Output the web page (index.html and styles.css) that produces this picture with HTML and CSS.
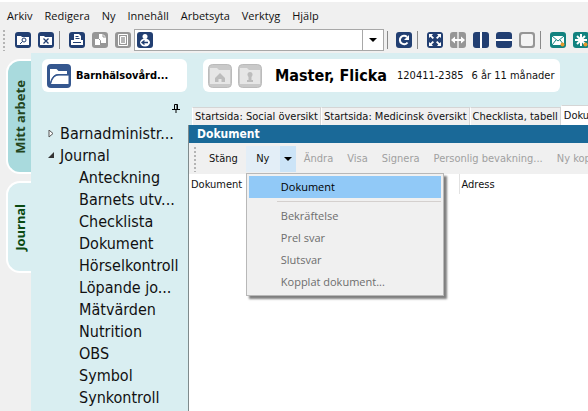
FILE: index.html
```
<!DOCTYPE html>
<html lang="sv">
<head>
    <meta charset="UTF-8">
    <meta name="viewport" content="width=device-width, initial-scale=1.0">
    <title>Dokument - Master, Flicka</title>
    <link rel="stylesheet" href="styles.css">
</head>
<body>
    <nav class="menubar">
        <button>Arkiv</button>
        <button>Redigera</button>
        <button>Ny</button>
        <button>Innehåll</button>
        <button>Arbetsyta</button>
        <button>Verktyg</button>
        <button>Hjälp</button>
    </nav>

    <div class="toolbar">
        <span class="grip"></span>
        <button class="icon" aria-label="Sök patient">
            <svg viewBox="0 0 16 16"><rect width="16" height="16" rx="3" fill="#223f72"/><path d="M2 4h4l1 1h7v8H2z" fill="#fff"/><circle cx="9" cy="8" r="2" fill="none" stroke="#223f72"/><path d="M7.500 9.500L5 12" stroke="#223f72"/></svg>
        </button>
        <button class="icon" aria-label="Stäng patient">
            <svg viewBox="0 0 16 16"><rect width="16" height="16" rx="3" fill="#223f72"/><path d="M2 4h4l1 1h7v8H2z" fill="#fff"/><path d="M5.500 6.500l5 5M10.500 6.500l-5 5" stroke="#223f72" stroke-width="1.300"/></svg>
        </button>
        <span class="divider"></span>
        <button class="icon" aria-label="Skriv ut">
            <svg viewBox="0 0 16 16"><rect width="16" height="16" rx="3" fill="#223f72"/><path d="M5 2h5l2 2v4h2v5H2V8h3z" fill="#fff"/><path d="M6.500 4.500h3M6.500 6.500h4M4 10.500h8" stroke="#223f72"/></svg>
        </button>
        <button class="icon" aria-label="Kopiera" disabled>
            <svg viewBox="0 0 16 16"><rect width="16" height="16" rx="3" fill="#969696"/><path d="M7 2h4l3 3v6H7z" fill="#fff"/><path d="M11 2v3h3" fill="none" stroke="#969696"/><path d="M2.500 6.500h4l2 2v5h-6z" fill="#fff" stroke="#969696"/></svg>
        </button>
        <button class="icon" aria-label="Klistra in" disabled>
            <svg viewBox="0 0 16 16"><rect width="16" height="16" rx="3" fill="#969696"/><path d="M3.500 2.500h9v11h-9z" fill="none" stroke="#fff"/><path d="M5.500 4.500h5v7h-5z" fill="#b5b5b5" stroke="#fff"/></svg>
        </button>
        <div class="combo">
            <svg class="combo-icon" viewBox="0 0 16 16"><rect width="16" height="16" rx="3" fill="#223f72"/><circle cx="8" cy="4.500" r="2.500" fill="#fff"/><ellipse cx="8" cy="10.500" rx="5" ry="4" fill="#fff"/><path d="M5 10.500h6M7.500 8.500l-2.500 2 2.500 2" fill="none" stroke="#223f72" stroke-width="1.300"/></svg>
            <select aria-label="Patient"><option></option></select>
            <span class="combo-arrow"><i class="arrow"></i></span>
        </div>
        <span class="divider after-combo"></span>
        <button class="icon" aria-label="Uppdatera">
            <svg viewBox="0 0 16 16"><rect width="16" height="16" rx="3" fill="#223f72"/><path d="M11.500 10.500A4.200 4.200 0 1 1 11 5" fill="none" stroke="#fff" stroke-width="2"/><path d="M13 3v5H8z" fill="#fff"/></svg>
        </button>
        <span class="divider"></span>
        <button class="icon" aria-label="Maximera">
            <svg viewBox="0 0 16 16"><rect width="16" height="16" rx="3" fill="#223f72"/><path d="M2 2h4L4.700 3.400 7 5.700 5.700 7 3.400 4.700 2 6zM14 2h-4l1.300 1.400L9 5.700 10.300 7l2.300-2.300L14 6zM2 14h4l-1.300-1.400L7 10.300 5.700 9l-2.300 2.300L2 10zM14 14h-4l1.300-1.400L9 10.300 10.300 9l2.300 2.300L14 10z" fill="#fff"/></svg>
        </button>
        <button class="icon" aria-label="Anpassa bredd" disabled>
            <svg viewBox="0 0 16 16"><rect width="16" height="16" rx="3" fill="#969696"/><path d="M8 0v16" stroke="#eee" stroke-width="1.500"/><path d="M1 8l4-3.500V7h6V4.500L15 8l-4 3.500V9H5v2.500z" fill="#fff"/></svg>
        </button>
        <button class="icon" aria-label="Dela lodrätt">
            <svg viewBox="0 0 16 16"><rect width="16" height="16" rx="3" fill="#223f72"/><path d="M8 0v16" stroke="#fff" stroke-width="2"/></svg>
        </button>
        <button class="icon" aria-label="Dela vågrätt">
            <svg viewBox="0 0 16 16"><rect width="16" height="16" rx="3" fill="#223f72"/><path d="M0 8h16" stroke="#fff" stroke-width="2"/></svg>
        </button>
        <button class="icon" aria-label="Ett fönster" disabled>
            <svg viewBox="0 0 16 16"><rect width="16" height="16" rx="3" fill="#969696"/><rect x="2" y="2" width="12" height="12" rx="2" fill="#f4f4f4"/></svg>
        </button>
        <span class="divider"></span>
        <button class="icon" aria-label="Nytt meddelande">
            <svg viewBox="0 0 16 16"><rect width="16" height="16" rx="3" fill="#12827f"/><path d="M2 4h12v9H2z" fill="#fff"/><path d="M2 4l6 5 6-5M2 13l4-5M14 13l-4-5" fill="none" stroke="#12827f"/><circle cx="12.500" cy="12.500" r="2" fill="#e59a2c"/></svg>
        </button>
        <button class="icon" aria-label="Ny notering">
            <svg viewBox="0 0 16 16"><rect width="16" height="16" rx="3" fill="#12827f"/><path d="M8 2v12M2 8h12M4 4l8 8M12 4l-8 8" stroke="#fff" stroke-width="2"/><circle cx="12.500" cy="12.500" r="2" fill="#e59a2c"/></svg>
        </button>
    </div>

    <div class="workspace">
        <div class="rail">
            <button class="rail-tab work"><span>Mitt arbete</span></button>
            <button class="rail-tab journal"><span>Journal</span></button>
        </div>

        <aside class="sidebar">
            <button class="unit">
                <svg viewBox="0 0 24 24"><rect width="24" height="24" rx="4" fill="#35578f"/><path d="M3 19.500V5h6.500l2 2H20v3h-8c-5 0-7 3-9 9.500z" fill="#fff"/><path d="M4 20c1.500-6 4-8.500 8-8.500h9.500V20z" fill="#fff"/><path d="M3.500 19C5 13 8 10.700 12 10.700h9.500" fill="none" stroke="#35578f" stroke-width="1.200"/></svg>
                Barnhälsovård...
            </button>
            <button class="pin" aria-label="Fäst panelen">
                <svg viewBox="0 0 8 9"><path d="M2.500 5V.5h3V5M5 .5V5M0 5.500h8M4 5v4" fill="none" stroke="#000"/></svg>
            </button>
            <ul class="tree">
                <li>
                    <a href="#barnadministration"><svg viewBox="0 0 9 9"><path d="M2 0v7l4-3.500z" fill="#fff" stroke="#555"/></svg>Barnadministr...</a>
                </li>
                <li>
                    <a href="#journal"><svg viewBox="0 0 9 9"><path d="M7 0v6H1z" fill="#333"/></svg>Journal</a>
                    <ul>
                        <li><a href="#anteckning">Anteckning</a></li>
                        <li><a href="#barnets">Barnets utv...</a></li>
                        <li><a href="#checklista">Checklista</a></li>
                        <li><a href="#dokument">Dokument</a></li>
                        <li><a href="#horselkontroll">Hörselkontroll</a></li>
                        <li><a href="#lopande">Löpande jo...</a></li>
                        <li><a href="#matvarden">Mätvärden</a></li>
                        <li><a href="#nutrition">Nutrition</a></li>
                        <li><a href="#obs">OBS</a></li>
                        <li><a href="#symbol">Symbol</a></li>
                        <li><a href="#synkontroll">Synkontroll</a></li>
                    </ul>
                </li>
            </ul>
        </aside>

        <main class="content">
            <div class="patient">
                <button class="patient-icon" aria-label="Hem" disabled>
                    <svg viewBox="0 0 24 24"><rect x=".5" y=".5" width="23" height="23" rx="4" fill="#c9c9c9" stroke="#bbb"/><path d="M2 4h7l2 2h11v14H2z" fill="#e6e6e6"/><path d="M12 9l-5 5v4h3.500v-3h3v3H17v-4z" fill="#bcbcbc"/></svg>
                </button>
                <button class="patient-icon" aria-label="Patientinformation" disabled>
                    <svg viewBox="0 0 24 24"><rect x=".5" y=".5" width="23" height="23" rx="4" fill="#c9c9c9" stroke="#bbb"/><path d="M2 4h7l2 2h11v14H2z" fill="#e6e6e6"/><circle cx="12" cy="10.500" r="2.500" fill="#bcbcbc"/><path d="M10.500 12h3v4H15v2H9v-2h1.500z" fill="#bcbcbc"/></svg>
                </button>
                <h1>Master, Flicka</h1>
                <span class="pid">120411-2385</span>
                <span>6 år 11 månader</span>
            </div>

            <div class="tabs">
                <button>Startsida: Social översikt</button>
                <button>Startsida: Medicinsk översikt</button>
                <button>Checklista, tabell</button>
                <button class="active">Dokument</button>
            </div>

            <section class="pane">
                <h2>Dokument</h2>
                <div class="actions">
                    <span class="grip"></span>
                    <button class="action">Stäng</button>
                    <div class="split">
                        <button class="split-main">Ny</button>
                        <button class="split-arrow" aria-label="Visa fler"><i class="arrow"></i></button>
                        <div class="menu">
                            <button class="selected">Dokument</button>
                            <hr>
                            <button disabled>Bekräftelse</button>
                            <button disabled>Prel svar</button>
                            <button disabled>Slutsvar</button>
                            <button disabled>Kopplat dokument...</button>
                        </div>
                    </div>
                    <button class="action" disabled>Ändra</button>
                    <button class="action" disabled>Visa</button>
                    <button class="action" disabled>Signera</button>
                    <button class="action" disabled>Personlig bevakning...</button>
                    <button class="action" disabled>Ny kopia</button>
                </div>
                <table class="documents">
                    <thead>
                        <tr><th class="col-doc">Dokument</th><th>Adress</th></tr>
                    </thead>
                </table>
            </section>
        </main>
    </div>
</body>
</html>
```

FILE: styles.css
```
* {
    box-sizing: border-box;
}

body {
    margin: 0;
    height: 100vh;
    display: flex;
    flex-direction: column;
    overflow: hidden;
    background-color: #f0f0f0;
    border-top: 2px solid #fff;
    font-family: "DejaVu Sans Condensed", "Noto Sans", sans-serif;
    font-size: 11px;
    color: #111;
}

button {
    flex: none;
    margin: 0;
    padding: 0;
    border: none;
    background: none;
    font: inherit;
    color: inherit;
    white-space: nowrap;
}

svg {
    display: block;
    flex: none;
}

/* Menu bar */
.menubar {
    display: flex;
    gap: 12px;
    padding: 4px 7px 0;
    height: 25px;
    font-family: "Open Sans", sans-serif;
}

.menubar button {
    height: 18px;
}

/* Icon toolbar */
.toolbar {
    display: flex;
    align-items: center;
    gap: 7px;
    height: 26px;
    padding-left: 2px;
}

.grip {
    flex: none;
    width: 4px;
    height: 22px;
    margin-right: 2px;
    background-image: radial-gradient(circle, #b4b4b4 1px, transparent 1px);
    background-size: 4px 4px;
}

.icon,
.combo-icon {
    width: 16px;
    height: 16px;
}

.divider {
    flex: none;
    width: 1px;
    height: 18px;
    margin: 0 2px 0 -2px;
    background-color: #8a8a8a;
}

.combo {
    flex: none;
    display: flex;
    align-items: center;
    width: 250px;
    height: 22px;
    margin-left: -4px;
    padding-left: 2px;
    border: 1px solid #a8a8a8;
    background-color: #fff;
}

.combo select {
    flex: 1;
    height: 20px;
    border: none;
    background: none;
    appearance: none;
}

.combo-arrow {
    display: flex;
    align-items: center;
    justify-content: center;
    width: 21px;
    height: 20px;
    border-left: 1px solid #a8a8a8;
}

.divider.after-combo {
    margin-left: -4px;
    margin-right: 1px;
}

.arrow {
    border: 4px solid transparent;
    border-top-color: #000;
    border-bottom: none;
}

/* Main area */
.workspace {
    flex: 1;
    display: flex;
    min-height: 0;
    background-color: #d9eef1;
}

.rail {
    flex: none;
    display: flex;
    flex-direction: column;
    gap: 7px;
    width: 31px;
    padding: 6px 0 0 6px;
    background-color: #f0f0f0;
}

.rail-tab {
    display: flex;
    align-items: center;
    justify-content: center;
    border: 2px solid #fff;
    border-right: none;
    border-radius: 14px 0 0 14px;
    font-family: "Noto Sans", sans-serif;
    font-size: 13px;
    font-weight: bold;
}

.rail-tab span {
    writing-mode: vertical-rl;
    transform: rotate(180deg);
}

.work {
    height: 115px;
    background-color: #a9dadd;
    color: #23461d;
}

.journal {
    height: 92px;
    background-color: #d9eef1;
    color: #0a4a12;
}

.sidebar {
    flex: none;
    display: flex;
    flex-direction: column;
    width: 157px;
    padding-top: 6px;
}

.unit {
    display: flex;
    align-items: center;
    gap: 5px;
    height: 33px;
    margin: 0 1px 0 11px;
    padding-left: 5px;
    border-radius: 6px;
    background-color: #fff;
    font-weight: bold;
    color: #000;
}

.unit svg {
    width: 24px;
    height: 24px;
}

.pin {
    align-self: flex-end;
    width: 8px;
    height: 9px;
    margin: 12px 8px 10px 0;
}

.tree,
.tree ul {
    margin: 0;
    padding: 0;
    list-style: none;
}

.tree {
    padding-left: 16px;
    font-size: 16px;
    line-height: 22px;
}

.tree ul {
    padding-left: 32px;
}

.tree a {
    display: flex;
    align-items: center;
    gap: 4px;
    color: #111;
    text-decoration: none;
    white-space: nowrap;
}

.tree svg {
    width: 9px;
    height: 9px;
}

.content {
    flex: 1;
    display: flex;
    flex-direction: column;
    min-width: 0;
    padding-top: 6px;
    overflow: hidden;
}

.patient {
    display: flex;
    align-items: center;
    gap: 6px;
    height: 33px;
    margin: 0 28px 0 15px;
    padding-left: 5px;
    border-radius: 6px;
    background-color: #fff;
    white-space: nowrap;
}

.patient-icon,
.patient-icon svg {
    width: 24px;
    height: 24px;
}

.patient h1 {
    margin: 0 4px 0 7px;
    font-size: 16px;
    color: #000;
}

.pid {
    margin-right: 2px;
}

/* Document tabs */
.tabs {
    display: flex;
    align-items: flex-end;
    height: 33px;
    padding-left: 4px;
}

.tabs button {
    height: 18px;
    padding: 0 2px;
    border: 1px solid #d5d5d5;
    border-left-color: #fff;
    border-bottom: none;
    background-color: #f0f0f0;
    line-height: 17px;
}

.tabs .active {
    height: 20px;
    background-color: #fff;
}

.pane {
    flex: 1;
    border-left: 1px solid #7f8a8c;
    background-color: #fff;
}

.pane h2 {
    margin: 0;
    padding-left: 8px;
    background-color: #1a6998;
    color: #fff;
    font-size: 12px;
    line-height: 18px;
}

.actions {
    display: flex;
    align-items: center;
    height: 31px;
    padding-left: 4px;
    background-color: #f0f0f0;
}

.actions .grip {
    height: 26px;
    margin-right: 5px;
}

.action {
    height: 25px;
    padding: 0 7px;
}

.action:disabled {
    color: #a0a0a0;
}

.split {
    position: relative;
    display: flex;
    flex: none;
    height: 26px;
    margin: 0 1px;
}

.split-main {
    width: 34px;
    background-color: #e3eef7;
}

.split-arrow {
    display: flex;
    align-items: center;
    justify-content: center;
    width: 16px;
    background-color: #cce4f7;
}

/* Drop-down under the Ny button */
.menu {
    position: absolute;
    top: 27px;
    left: 0;
    z-index: 1;
    width: 198px;
    padding: 2px;
    border: 1px solid #b8b8b8;
    background-color: #f0f0f0;
    box-shadow: 3px 3px 2px rgba(0, 0, 0, 0.5);
    font-family: "Open Sans", sans-serif;
}

.menu button {
    display: block;
    width: 100%;
    height: 22px;
    padding-left: 32px;
    text-align: left;
}

.menu button:disabled {
    color: #6d6d6d;
}

.menu .selected {
    background-color: #91c9f7;
    color: #000;
}

.menu hr {
    height: 1px;
    margin: 3px 0 3px 28px;
    border: none;
    background-color: #d4d0ce;
}

.documents {
    width: 100%;
    border-collapse: collapse;
    table-layout: fixed;
}

.documents th {
    height: 20px;
    padding: 0 2px;
    font-weight: normal;
    text-align: left;
}

.documents .col-doc {
    width: 270px;
    border-right: 1px solid #e2e2e2;
}
```
